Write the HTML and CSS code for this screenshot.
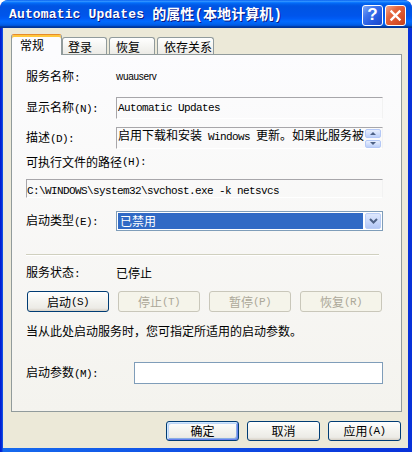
FILE: index.html
```html
<!DOCTYPE html>
<html lang="zh-CN">
<head>
<meta charset="utf-8">
<title>Automatic Updates 的属性(本地计算机)</title>
<link rel="stylesheet" href="styles.css">
</head>
<body>
<div class="window">
  <div class="titlebar">
    <div class="title"><span class="tl">Automatic Updates </span><span class="tc">的属性(本地计算机)</span></div>
    <div class="tbtns">
      <div class="tbtn help">?</div>
      <div class="tbtn close"><svg width="13" height="13" viewBox="0 0 13 13"><path d="M2.5 2.5 L10.5 10.5 M10.5 2.5 L2.5 10.5" stroke="#fff" stroke-width="2.4" stroke-linecap="square"/></svg></div>
    </div>
  </div>
  <div class="client">
    <div class="tabs">
      <div class="tab active">常规</div>
      <div class="tab t2">登录</div>
      <div class="tab t3">恢复</div>
      <div class="tab t4">依存关系</div>
    </div>
    <div class="panel">
      <div class="row r1"><span>服务名称<span class="m">:</span></span><span class="sname">wuauserv</span></div>
      <div class="row r2"><span>显示名称<span class="m">(N):</span></span><div class="ro"><span class="m">Automatic Updates</span></div></div>
      <div class="row r3"><span>描述<span class="m">(D):</span></span>
        <div class="ro desc">
          <span class="dtext">启用下载和安装<span class="m"> Windows </span>更新。如果此服务被</span>
          <div class="spin"><div class="sb up"></div><div class="sb down"></div></div>
        </div>
      </div>
      <div class="lbl r4">可执行文件的路径<span class="m">(H):</span></div>
      <div class="ro path"><span class="m">C:\WINDOWS\system32\svchost.exe -k netsvcs</span></div>
      <div class="row r6"><span>启动类型<span class="m">(E):</span></span>
        <div class="combo">
          <div class="sel">已禁用</div>
          <div class="drop"><svg width="9" height="6" viewBox="0 0 9 6"><path d="M1 1 L4.5 4.5 L8 1" fill="none" stroke="#4D6185" stroke-width="2"/></svg></div>
        </div>
      </div>
      <div class="sep"></div>
      <div class="row r7"><span>服务状态<span class="m">:</span></span><span>已停止</span></div>
      <div class="btnrow">
        <button class="btn">启动<span class="m">(S)</span></button>
        <button class="btn dis">停止<span class="m">(T)</span></button>
        <button class="btn dis">暂停<span class="m">(P)</span></button>
        <button class="btn dis">恢复<span class="m">(R)</span></button>
      </div>
      <div class="note">当从此处启动服务时，您可指定所适用的启动参数。</div>
      <div class="row r10"><span>启动参数<span class="m">(M):</span></span><div class="input"></div></div>
    </div>
    <div class="footer">
      <button class="btn fb def">确定</button>
      <button class="btn fb">取消</button>
      <button class="btn fb">应用<span class="m">(A)</span></button>
    </div>
  </div>
</div>
</body>
</html>
```
FILE: styles.css
```css
* { box-sizing: border-box; }
html, body { margin: 0; padding: 0; }
body {
  width: 412px;
  height: 452px;
  background: #fff;
  font-family: "Noto Sans CJK SC", sans-serif;
  font-size: 12px;
  line-height: 14px;
  color: #000;
}
.m {
  font-family: "Liberation Mono", "Noto Sans CJK SC", monospace;
  font-size: 11px;
  letter-spacing: -0.6px;
}
.window {
  width: 412px;
  height: 452px;
  display: flex;
  flex-direction: column;
  background: linear-gradient(90deg, #0019CF 0, #0831D9 2px, #166AEE 3px, #0831D9 100%);
  border-radius: 8px 8px 0 0;
  overflow: hidden;
}
.titlebar {
  height: 28px;
  flex: none;
  display: flex;
  align-items: center;
  justify-content: space-between;
  padding: 0 6px 0 9px;
  border-radius: 8px 8px 0 0;
  background: linear-gradient(180deg, #0058EE 0%, #3593FF 4%, #288EFF 6%, #127DFF 8%, #036FFC 10%, #0262EE 14%, #0057E5 20%, #0054E3 24%, #0055EB 56%, #005BF5 66%, #026AFE 76%, #0062EF 86%, #0052D6 92%, #0040AB 94%, #003092 100%);
}
.title {
  color: #fff;
  font-weight: bold;
  text-shadow: 1px 1px #0A1883;
  white-space: nowrap;
  display: flex;
  align-items: center;
  margin-top: 2px;
}
.title .tl {
  font-family: "Liberation Mono", monospace;
  font-size: 13px;
  letter-spacing: 0.15px;
  white-space: pre;
}
.title .tc {
  font-family: "Liberation Mono", "Noto Sans CJK SC", monospace;
  font-size: 14px;
  letter-spacing: 0.1px;
}
.tbtns { display: flex; gap: 2px; margin-top: 2px; }
.tbtn {
  width: 21px;
  height: 21px;
  border: 1px solid #fff;
  border-radius: 3px;
  display: flex;
  align-items: center;
  justify-content: center;
}
.help {
  background: linear-gradient(135deg, #7FA9F7 0%, #3D73EC 35%, #2257DE 70%, #1C49C8 100%);
  color: #fff;
  font-family: "Liberation Sans", sans-serif;
  font-weight: bold;
  font-size: 17px;
}
.close {
  background: linear-gradient(135deg, #F4A58A 0%, #E5663E 35%, #D8502A 70%, #C2401C 100%);
}
.client {
  flex: 1;
  margin: 0 4px 4px 3px;
  background: #ECE9D8;
  padding: 6px 6px 0 8px;
  display: flex;
  flex-direction: column;
}
.tabs {
  height: 20px;
  flex: none;
  display: flex;
  align-items: flex-end;
}
.tab {
  height: 17px;
  border: 1px solid #919B9C;
  border-bottom: none;
  border-radius: 3px 3px 0 0;
  background: linear-gradient(180deg, #FFFFFF 0%, #F5F5F2 50%, #ECEBE6 100%);
  padding-left: 5px;
  display: flex;
  align-items: center;
  padding-top: 1px;
}
.tab.active {
  position: relative;
  z-index: 1;
  height: 21px;
  width: 51px;
  margin-bottom: -1px;
  padding-left: 8px;
  padding-top: 0;
  background: #FCFCFE;
  border-top: 1px solid #E68B2C;
  box-shadow: inset 0 2px #FFC73C;
}
.t2 { width: 45px; }
.t3 { width: 46px; margin-left: 2px; padding-left: 6px; }
.t4 { width: 57px; margin-left: 2px; padding-left: 6px; }
.panel {
  height: 358px;
  flex: none;
  border: 1px solid #919B9C;
  background: linear-gradient(180deg, #FCFCFE 0%, #F4F3EE 100%);
  padding: 0 18px 0 14px;
  display: flex;
  flex-direction: column;
}
.panel > * { flex: none; }
.row {
  display: grid;
  grid-template-columns: 90px 1fr;
  align-items: center;
}
.r1 { margin-top: 12px; height: 20px; }
.r2 { margin-top: 10px; height: 22px; }
.r3 { margin-top: 8px; height: 22px; }
.r4 { margin-top: 4px; height: 18px; display: flex; align-items: center; }
.r6 { margin-top: 13px; height: 20px; }
.r7 { margin-top: 7px; height: 20px; }
.r10 { margin-top: 21px; height: 22px; grid-template-columns: 108px 1fr; }
.sname {
  font-family: "Liberation Sans", sans-serif;
  font-size: 10px;
  letter-spacing: -0.3px;
}
.ro {
  height: 100%;
  border: 1px solid;
  border-color: #A7A6AA #F2F2F2 #FFFFFF #A7A6AA;
  padding: 1px 1px 0 1px;
  line-height: 13px;
  white-space: nowrap;
  overflow: hidden;
}
.ro.path {
  margin-top: 8px;
  height: 19px;
  padding: 2px 0 0 0;
}
.desc {
  display: flex;
  justify-content: space-between;
  padding: 0 0 0 1px;
}
.dtext { line-height: 14px; }
.spin {
  display: flex;
  flex-direction: column;
  gap: 2px;
  padding: 1px 1px 0 0;
}
.sb {
  width: 16px;
  height: 9px;
  border: 1px solid #B4C8F6;
  border-radius: 2px;
  background: linear-gradient(180deg, #E8EFFD 0%, #CFDDFB 60%, #BCCFF8 100%);
  display: flex;
  align-items: center;
  justify-content: center;
}
.up::after {
  content: "";
  border-left: 3px solid transparent;
  border-right: 3px solid transparent;
  border-bottom: 3px solid #4D6185;
}
.down::after {
  content: "";
  border-left: 3px solid transparent;
  border-right: 3px solid transparent;
  border-top: 3px solid #4D6185;
}
.combo {
  height: 100%;
  border: 1px solid #7F9DB9;
  background: #fff;
  padding: 1px;
  display: flex;
  gap: 2px;
}
.sel {
  flex: 1;
  background: #316AC5;
  color: #fff;
  padding-left: 2px;
  display: flex;
  align-items: center;
}
.drop {
  width: 16px;
  border: 1px solid #B9CDF6;
  border-radius: 2px;
  background: linear-gradient(180deg, #DDE7FD 0%, #C6D6FA 60%, #B2C6F5 100%);
  display: flex;
  align-items: center;
  justify-content: center;
}
.sep {
  margin-top: 23px;
  margin-right: 4px;
  height: 2px;
  border-top: 1px solid #D0D0BF;
  border-bottom: 1px solid #FFFFFF;
}
.btnrow {
  margin-top: 8px;
  height: 21px;
  display: flex;
  gap: 9px;
  padding-left: 1px;
}
.btn {
  width: 82px;
  height: 21px;
  border: 1px solid #003C74;
  border-radius: 3px;
  background: linear-gradient(180deg, #FFFFFF 0%, #F4F4F0 45%, #ECEBE6 85%, #D6D0C5 100%);
  font: inherit;
  color: #000;
  padding: 0;
  display: flex;
  align-items: center;
  justify-content: center;
}
.btn.dis {
  border-color: #C9C7BA;
  background: #F5F4EA;
  color: #ACA899;
}
.note {
  margin-top: 9px;
  height: 20px;
  display: flex;
  align-items: center;
}
.input {
  height: 100%;
  border: 1px solid #7F9DB9;
  background: #fff;
}
.footer {
  margin-top: 9px;
  display: flex;
  justify-content: flex-end;
  gap: 8px;
  padding-right: 1px;
}
.btn.fb { width: 73px; height: 20px; }
.btn.def {
  box-shadow: inset 1px 1px #CEE7FF, inset -1px -1px #6982EE, inset 2px 2px #BCD4F6, inset -2px -2px #89ADE4;
}
```
